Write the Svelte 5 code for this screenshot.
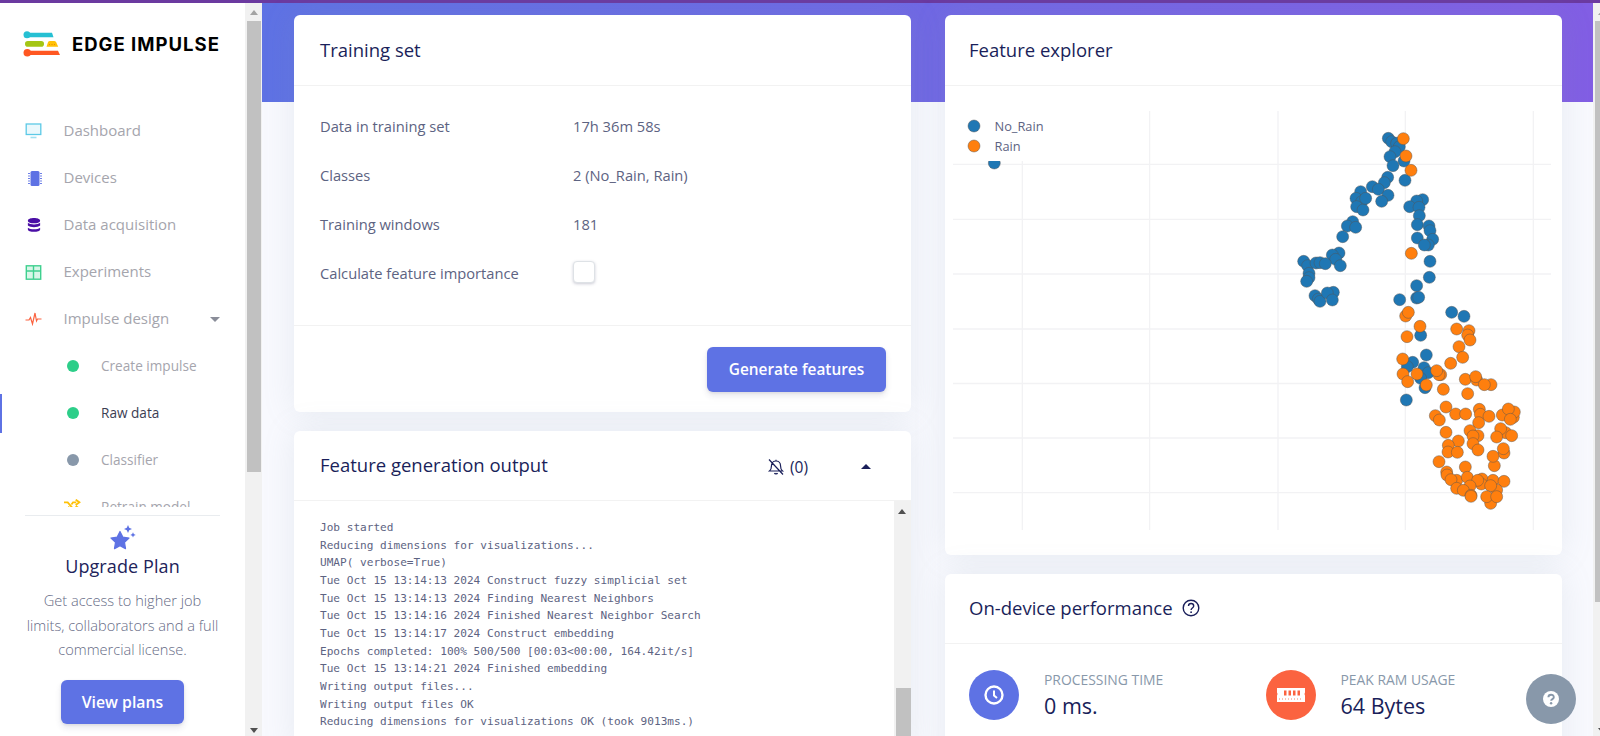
<script>
  const nav = [
    { label: 'Dashboard', icon: 'monitor' },
    { label: 'Devices', icon: 'chip' },
    { label: 'Data acquisition', icon: 'db' },
    { label: 'Experiments', icon: 'table' },
    { label: 'Impulse design', icon: 'pulse', caret: true }
  ];
  const sub = [
    { label: 'Create impulse', color: '#2dce89' },
    { label: 'Raw data', color: '#2dce89', active: true },
    { label: 'Classifier', color: '#8898aa' }
  ];
  const rows = [
    ['Data in training set', '17h 36m 58s'],
    ['Classes', '2 (No_Rain, Rain)'],
    ['Training windows', '181']
  ];
  const log = [
    'Job started',
    'Reducing dimensions for visualizations...',
    'UMAP( verbose=True)',
    'Tue Oct 15 13:14:13 2024 Construct fuzzy simplicial set',
    'Tue Oct 15 13:14:13 2024 Finding Nearest Neighbors',
    'Tue Oct 15 13:14:16 2024 Finished Nearest Neighbor Search',
    'Tue Oct 15 13:14:17 2024 Construct embedding',
    'Epochs completed: 100% 500/500 [00:03<00:00, 164.42it/s]',
    'Tue Oct 15 13:14:21 2024 Finished embedding',
    'Writing output files...',
    'Writing output files OK',
    'Reducing dimensions for visualizations OK (took 9013ms.)'
  ];
  const vGrid = [1022.3, 1149.6, 1278, 1405.3, 1533.3];
  const hGrid = [164.3, 219.3, 274, 329, 383.5, 438, 492.7];
  const z4 = ([x, y]) => [1240 + x / 3, 100 + y / 3];
  const z5 = ([x, y]) => [1300 + x / 3, 300 + y / 3];
  const blue = [
    [445,115],[455,125],[470,130],[478,140],[465,155],[450,170],[492,183],[459,197],[443,232],[433,248],[495,241],[397,260],[415,268],[362,275],[348,295],[365,305],[350,320],[369,330],[377,295],[444,286],[425,304],[548,299],[530,303],[509,320],[537,322],[538,347],[338,365],[322,378],[347,382],[532,374],[567,378],[570,392],[308,410],[532,414],[578,418],[565,435],[553,435],[297,459],[277,465],[287,478],[301,497],[191,484],[203,497],[228,489],[240,488],[256,491],[570,484],[568,532],[207,520],[207,533],[200,544],[530,557],[225,587],[235,597],[240,604],[280,577],[262,579],[277,600],[530,594],[536,592],[479,599],[635,637],[672,649]
  ].map(z4).concat([[362,106],[379,165],[338,187],[322,200],[372,203],[385,218],[362,235],[375,263],[319,300]].map(z5));
  const orange = [[490,116],[498,168],[513,211],[514,460]].map(z4).concat([
    [317,48],[325,37],[360,79],[321,110],[470,87],[507,92],[503,105],[510,120],[477,140],[488,172],[452,190],[308,177],[309,222],[351,222],[323,245],[379,255],[422,224],[417,224],[410,212],[430,268],[496,238],[530,240],[527,230],[573,254],[553,254],[503,281],[438,321],[406,347],[418,360],[467,342],[497,342],[538,328],[541,343],[567,349],[536,368],[607,345],[640,352],[643,336],[625,327],[631,358],[438,397],[510,392],[534,407],[519,408],[519,431],[475,423],[534,450],[445,436],[444,456],[472,457],[617,398],[602,386],[590,411],[635,407],[612,459],[610,446],[583,497],[579,469],[417,485],[496,501],[440,516],[441,525],[470,541],[453,539],[470,565],[502,532],[546,537],[544,552],[533,541],[510,558],[490,571],[513,586],[513,589],[579,541],[612,544],[590,570],[572,557],[572,610],[560,590],[590,590]
  ].map(z5));
</script>

<div class="page">
  <div class="topline"></div>
  <div class="shell">
    <aside class="sidebar">
      <div class="side-inner">
        <div class="brand">
          <svg class="logo" viewBox="0 0 38 27" width="38" height="27">
            <path d="M4 2.700h25l1.500 4.600H4z" fill="#26c0d3"/>
            <circle cx="4" cy="4.700" r="3.500" fill="#26c0d3"/>
            <rect x="2" y="11" width="19" height="5.700" rx="2.800" fill="#a4c615"/>
            <path d="M23.500 16.700 l1.500-4.500 q.4-1.200 2-1.200 h4 q1.600 0 2.200 1.200 l2 4.500z" fill="#ffc107"/>
            <path d="M26 14.500h7" stroke="#f08a00" stroke-width="1" stroke-dasharray="1 1.500"/>
            <path d="M4 20.700h31l2 4.300H4z" fill="#ff5722"/>
            <circle cx="4.300" cy="22.700" r="3.800" fill="#ff5722"/>
          </svg>
          <span class="brand-name">EDGE IMPULSE</span>
        </div>
        <nav class="nav">
          {#each nav as item}
            <div class="nav-row">
              <span class="nav-icon">
                {#if item.icon === 'monitor'}
                  <svg viewBox="0 0 16 16" width="17" height="16"><rect x="0.700" y="1" width="14.600" height="10.500" fill="#eaf8fc" stroke="#5cc9e6" stroke-width="1.300"/><path d="M5 14.500h6" stroke="#9fdff0" stroke-width="1.600"/></svg>
                {:else if item.icon === 'chip'}
                  <svg class="nudge" viewBox="0 0 16 16" width="16" height="17"><rect x="3.500" y="0.500" width="9" height="15" rx="1.500" fill="#5e72e4"/><path d="M1 3h2M1 5.500h2M1 8h2M1 10.500h2M1 13h2M13 3h2M13 5.500h2M13 8h2M13 10.500h2M13 13h2" stroke="#5e72e4" stroke-width="0.900"/></svg>
                {:else if item.icon === 'db'}
                  <svg class="nudge" viewBox="0 0 16 16" width="14" height="16"><path d="M1 3c0-4 14-4 14 0s-14 4-14 0zM1 5.500c3 2.400 11 2.400 14 0v3c-3 2.600-11 2.600-14 0zM1 11c3 2.400 11 2.400 14 0v2c0 3.600-14 3.600-14 0z" fill="#4a0ea5"/></svg>
                {:else if item.icon === 'table'}
                  <svg viewBox="0 0 16 15" width="17" height="15"><rect x="0.800" y="0.800" width="14.400" height="13.400" fill="#d8f6e8" stroke="#3fd08f" stroke-width="1.400"/><path d="M1 6h14M8 1v13" stroke="#3fd08f" stroke-width="1.400" fill="none"/></svg>
                {:else}
                  <svg viewBox="0 0 16 14" width="17" height="14"><path d="M0 8h3.500l1.500-2.500 2 6.500 2.500-11 1.500 8 1-2h4" fill="none" stroke="#fb6340" stroke-width="1.200"/></svg>
                {/if}
              </span>
              <span class="nav-label">{item.label}</span>
              {#if item.caret}<span class="caret-down"></span>{/if}
            </div>
          {/each}
          {#each sub as item}
            <div class="nav-row subrow" class:active={item.active}>
              <span class="dot" style:background={item.color}></span>
              <span class="nav-label">{item.label}</span>
            </div>
          {/each}
          <div class="nav-row subrow retrain">
            <svg class="shuffle" viewBox="0 0 16 12" width="17" height="13"><path d="M0 3h3.500l5 6h3M0 9h3.500l1.500-2M7 5l1.500-2h3M11 0.500l3.500 2.500-3.500 2.500M11 6.500l3.500 2.500-3.500 2.500" fill="none" stroke="#ffc107" stroke-width="1.700"/></svg>
            <span class="nav-label">Retrain model</span>
          </div>
        </nav>
        <div class="upgrade">
          <svg class="stars" viewBox="0 0 26 26" width="26" height="26">
            <path d="M10 6.500l2.800 5.600 6.200.9-4.500 4.400 1 6.200-5.500-2.900-5.500 2.900 1-6.200L1 13l6.200-.9z" fill="#5e72e4" stroke="#5e72e4" stroke-width="1.200" stroke-linejoin="round"/>
            <path d="M18 0l1.200 2.800L22 4l-2.800 1.200L18 8l-1.200-2.800L14 4l2.800-1.200zM23 7.200l.8 1.900 1.900.8-1.900.8-.8 1.900-.8-1.900-1.900-.8 1.900-.8z" fill="#5e72e4"/>
          </svg>
          <div class="up-title">Upgrade Plan</div>
          <p class="up-text">Get access to higher job<br>limits, collaborators and a full<br>commercial license.</p>
          <button class="btn view">View plans</button>
        </div>
      </div>
      <div class="scrollbar">
        <span class="arr up"></span>
        <span class="thumb"></span>
        <span class="arr down"></span>
      </div>
    </aside>

    <main class="main">
      <div class="banner"></div>
      <div class="columns">
        <div class="col">
          <section class="card train">
            <header class="card-head tall"><h3>Training set</h3></header>
            <div class="train-body">
              {#each rows as [k, v]}
                <div class="kv"><span class="k">{k}</span><span class="v">{v}</span></div>
              {/each}
              <div class="kv"><span class="k">Calculate feature importance</span><span class="check"></span></div>
            </div>
            <footer class="train-foot"><button class="btn gen">Generate features</button></footer>
          </section>
          <section class="card output">
            <header class="card-head out-head">
              <h3>Feature generation output</h3>
              <span class="bell">
                <svg viewBox="0 0 18 16" width="18" height="16"><path d="M9 2c-2.800 0-4.500 2-4.500 4.500 0 3-.8 4.500-2 5.500h13c-1.200-1-2-2.500-2-5.500C13.500 4 11.800 2 9 2zM7.500 14c.3 1.200 2.700 1.200 3 0M9 2V.8M2 .5l14 15" fill="none" stroke="#1a1f5a" stroke-width="1.200"/></svg>
                (0)
              </span>
              <span class="caret-up"></span>
            </header>
            <div class="log-wrap">
              <pre class="log">{log.join('\n')}</pre>
              <div class="log-bar"><span class="arr-small"></span><span class="log-thumb"></span></div>
            </div>
          </section>
        </div>
        <div class="col">
          <section class="card explorer">
            <header class="card-head tall right"><h3>Feature explorer</h3></header>
            <svg class="plot" viewBox="945 86 617 469" width="617" height="469">
              {#each vGrid as x}<line x1={x} x2={x} y1="111" y2="530" class="grid"/>{/each}
              {#each hGrid as y}<line x1="953" x2="1551" y1={y} y2={y} class="grid"/>{/each}
              <circle cx="994.300" cy="163" r="6" class="pt b"/>
              {#each blue as [x, y]}<circle cx={x} cy={y} r="6" class="pt b"/>{/each}
              {#each orange as [x, y]}<circle cx={x} cy={y} r="6" class="pt o"/>{/each}
              <rect x="953" y="111" width="130" height="50" fill="#fff"/>
              <circle cx="974" cy="126" r="6" class="pt b"/>
              <circle cx="974" cy="146" r="6" class="pt o"/>
              <text x="994.500" y="131" class="legend">No_Rain</text>
              <text x="994.500" y="151" class="legend">Rain</text>
            </svg>
          </section>
          <section class="card perf">
            <header class="card-head right">
              <h3>On-device performance</h3>
              <svg class="qm" viewBox="0 0 18 18" width="18" height="18"><circle cx="9" cy="9" r="7.800" fill="none" stroke="#1a1f5a" stroke-width="1.400"/><path d="M6.500 7c0-3.300 5.200-3.300 5.200 0 0 2-2.600 2-2.600 4" fill="none" stroke="#1a1f5a" stroke-width="1.400"/><circle cx="9.100" cy="13.200" r="0.900" fill="#1a1f5a"/></svg>
            </header>
            <div class="stats">
              <div class="stat">
                <span class="round blue">
                  <svg viewBox="0 0 20 20" width="20" height="20"><circle cx="10" cy="10" r="8.500" fill="none" stroke="#fff" stroke-width="2.400"/><path d="M10 5.500v5l3 2.500" fill="none" stroke="#fff" stroke-width="2"/></svg>
                </span>
                <div><div class="s-label">PROCESSING TIME</div><div class="s-value">0 ms.</div></div>
              </div>
              <div class="stat">
                <span class="round red">
                  <svg viewBox="0 0 28 16" width="28" height="16"><path d="M0 1h28v4.500a2.500 2.500 0 0 0 0 3V15H0V8.500a2.500 2.500 0 0 0 0-3z" fill="#fff"/><path d="M7 3.500h2.500v5H7zM11.500 3.500H14v5h-2.500zM16 3.500h2.500v5H16zM20.500 3.500H23v5h-2.500z" fill="#fb6340"/><path d="M2 12h24" stroke="#fb6340" stroke-width="0.800" stroke-dasharray="1 2"/></svg>
                </span>
                <div><div class="s-label">PEAK RAM USAGE</div><div class="s-value">64 Bytes</div></div>
              </div>
            </div>
          </section>
        </div>
      </div>
    </main>
    <div class="page-bar"><span class="arr up"></span><span class="page-thumb"></span><span class="arr down"></span></div>
  </div>
  <button class="fab" aria-label="Help"><svg viewBox="0 0 16 16" width="16" height="16"><circle cx="8" cy="8" r="8" fill="#fff"/><path d="M5.400 6.200c0-3.300 5.400-3.300 5.400 0 0 2-2.700 1.800-2.700 3.600" fill="none" stroke="#8898aa" stroke-width="1.900"/><circle cx="8.100" cy="12.300" r="1.200" fill="#8898aa"/></svg></button>
</div>

<style>
  :global(body) { margin: 0; background: #f8f9fe; font-family: "Open Sans", sans-serif; overflow: hidden; }
  * { box-sizing: border-box; }
  .page { width: 1600px; height: 736px; position: relative; overflow: hidden; background: #f8f9fe; }
  .topline { height: 3px; background: #6b3aa0; }
  .shell { display: flex; height: 733px; }

  .sidebar { width: 262px; flex: none; display: flex; background: #fff; }
  .side-inner { width: 245px; display: flex; flex-direction: column; }
  .brand { height: 61px; padding: 27px 0 0 23px; display: flex; align-items: flex-start; gap: 11px; flex: none; }
  .logo { flex: none; }
  .brand-name { font-family: Inter, sans-serif; font-weight: 700; font-size: 18.500px; line-height: 27px; color: #000; letter-spacing: 1px; white-space: nowrap; margin-top: 1px; }
  .nav { height: 443px; padding-top: 43.500px; overflow: hidden; flex: none; }
  .nav-row { height: 47px; display: flex; align-items: center; position: relative; padding-left: 25px; font-size: 15px; color: #a5a5ad; }
  .nav-icon { width: 38.500px; display: flex; align-items: center; flex: none; }
  .nudge { margin-left: 2px; }
  .nav-label { white-space: nowrap; padding-bottom: 2px; }
  .caret-down { position: absolute; left: 210px; top: 21px; border: 5px solid transparent; border-top: 5px solid #8a8d99; border-bottom: 0; }
  .subrow { padding-left: 67px; font-size: 13.600px; }
  .dot { position: absolute; left: 67px; top: 17.500px; width: 12px; height: 12px; border-radius: 50%; }
  .subrow .nav-label { margin-left: 34px; }
  .subrow.active .nav-label { color: #3b3d52; }
  .subrow.active::before { content: ""; position: absolute; left: 0; top: 4px; width: 2px; height: 39px; background: #5e72e4; }
  .shuffle { position: absolute; left: 64px; top: 15px; }
  .retrain .nav-label { margin-left: 34px; }

  .upgrade { margin: 8px 25px 0 25px; border-top: 1px solid #e9ecef; text-align: center; display: flex; flex-direction: column; align-items: center; flex: 1; }
  .stars { margin-top: 9px; }
  .up-title { font-size: 18px; font-weight: 500; color: #22235a; line-height: 26px; margin-top: 2px; letter-spacing: 0.100px; white-space: nowrap; }
  .up-text { margin: 9px -4px 0; font-size: 14.600px; font-weight: 300; line-height: 24.500px; color: #656a85; white-space: nowrap; }
  .btn { border: 0; border-radius: 6px; background: #5e72e4; color: #fff; font-family: "Open Sans", sans-serif; font-weight: 600; font-size: 15.400px; box-shadow: 0 4px 6px rgba(50,50,93,.11), 0 1px 3px rgba(0,0,0,.08); }
  .view { width: 123px; height: 44px; margin-top: 18px; font-size: 15.800px; }

  .scrollbar { width: 17px; background: #f1f1f1; position: relative; }
  .thumb { position: absolute; left: 2px; right: 1px; top: 18px; height: 451px; background: #c1c1c1; }
  .arr { position: absolute; left: 5px; border: 4px solid transparent; }
  .arr.up { top: 7px; border-bottom: 5px solid #a3a3a3; border-top: 0; }
  .arr.down { bottom: 3px; border-top: 5px solid #505050; border-bottom: 0; }

  .main { width: 1331px; flex: none; position: relative; }
  .banner { position: absolute; left: 0; top: 0; right: 0; height: 99px; background: linear-gradient(87deg, #5e72e4, #825ee4); }
  .columns { position: relative; display: flex; padding: 12px 0 0 32px; gap: 34px; }
  .col { display: flex; flex-direction: column; gap: 19px; width: 617px; }
  .card { background: #fff; border-radius: 6px; box-shadow: 0 0 32px rgba(136,152,170,.15); overflow: hidden; flex: none; }
  .card-head { height: 70px; border-bottom: 1px solid rgba(0,0,0,.05); display: flex; align-items: center; padding: 0 0 2px 26px; flex: none; }
  .card-head.tall { height: 71px; }
  .card-head.right { padding-left: 24px; }
  h3 { margin: 0; font-size: 18.500px; font-weight: 500; color: #1a1f5a; white-space: nowrap; }

  .train { height: 397px; }
  .train-body { height: 240px; padding-top: 15px; border-bottom: 1px solid rgba(0,0,0,.05); }
  .kv { height: 49px; display: flex; align-items: center; padding-left: 26px; font-size: 14.700px; color: #5d6382; }
  .k { width: 253px; flex: none; }
  .check { width: 22px; height: 22px; background: #fff; border: 1px solid #dee2e6; border-radius: 4px; box-shadow: 0 1px 3px rgba(50,50,93,.25); margin-top: -1px; }
  .train-foot { display: flex; justify-content: flex-end; padding: 21px 25px 0 0; }
  .gen { width: 179px; height: 45px; }

  .output { height: 320px; }
  .out-head { position: relative; }
  .bell { position: absolute; left: 473px; top: 25px; display: flex; align-items: center; gap: 5px; font-size: 15.500px; color: #1a1f5a; }
  .caret-up { position: absolute; left: 567px; top: 33px; border: 5px solid transparent; border-bottom: 5px solid #1a1f5a; border-top: 0; }
  .log-wrap { display: flex; height: 249px; }
  .log { margin: 0; flex: 1; padding: 18px 0 0 26px; font-family: "DejaVu Sans Mono", monospace; font-size: 11.100px; line-height: 17.650px; color: #5d6382; overflow: hidden; }
  .log-bar { width: 17px; flex: none; background: #f1f1f1; position: relative; }
  .log-thumb { position: absolute; left: 2px; right: 0; top: 187px; height: 80px; background: #c1c1c1; }
  .arr-small { position: absolute; left: 4px; top: 8px; border: 4px solid transparent; border-bottom: 5px solid #505050; border-top: 0; }

  .explorer { height: 540px; }
  .plot { display: block; }
  .grid { stroke: #f2f2f4; stroke-width: 1.300; }
  .pt { stroke: #555; stroke-opacity: .45; stroke-width: 1; }
  .b { fill: #1f77b4; }
  .o { fill: #ff7f0e; }
  .legend { font-family: "Open Sans", sans-serif; font-size: 12.800px; fill: #5d6382; }

  .perf { height: 200px; }
  .perf .card-head { gap: 9px; }
  .stats { display: flex; padding: 26px 0 0 24px; }
  .stat { display: flex; width: 302px; gap: 25px; }
  .round { width: 50px; height: 50px; border-radius: 50%; display: flex; align-items: center; justify-content: center; flex: none; }
  .round.blue { background: #5e72e4; }
  .round.red { background: #fb6340; }
  .s-label { font-size: 13.900px; font-weight: 500; color: #8898aa; line-height: 17px; margin-top: 1px; white-space: nowrap; }
  .s-value { font-size: 21.500px; font-weight: 500; color: #1a1f5a; line-height: 27px; margin-top: 4px; white-space: nowrap; }

  .page-bar { width: 17px; flex: none; background: #f1f1f1; position: relative; }
  .page-thumb { position: absolute; left: 2px; right: 0; top: 18px; height: 581px; background: #c1c1c1; }

  .fab { position: absolute; left: 1526px; top: 674px; width: 50px; height: 50px; border-radius: 50%; border: 0; padding: 0; background: #8898aa; display: flex; align-items: center; justify-content: center; }
</style>
